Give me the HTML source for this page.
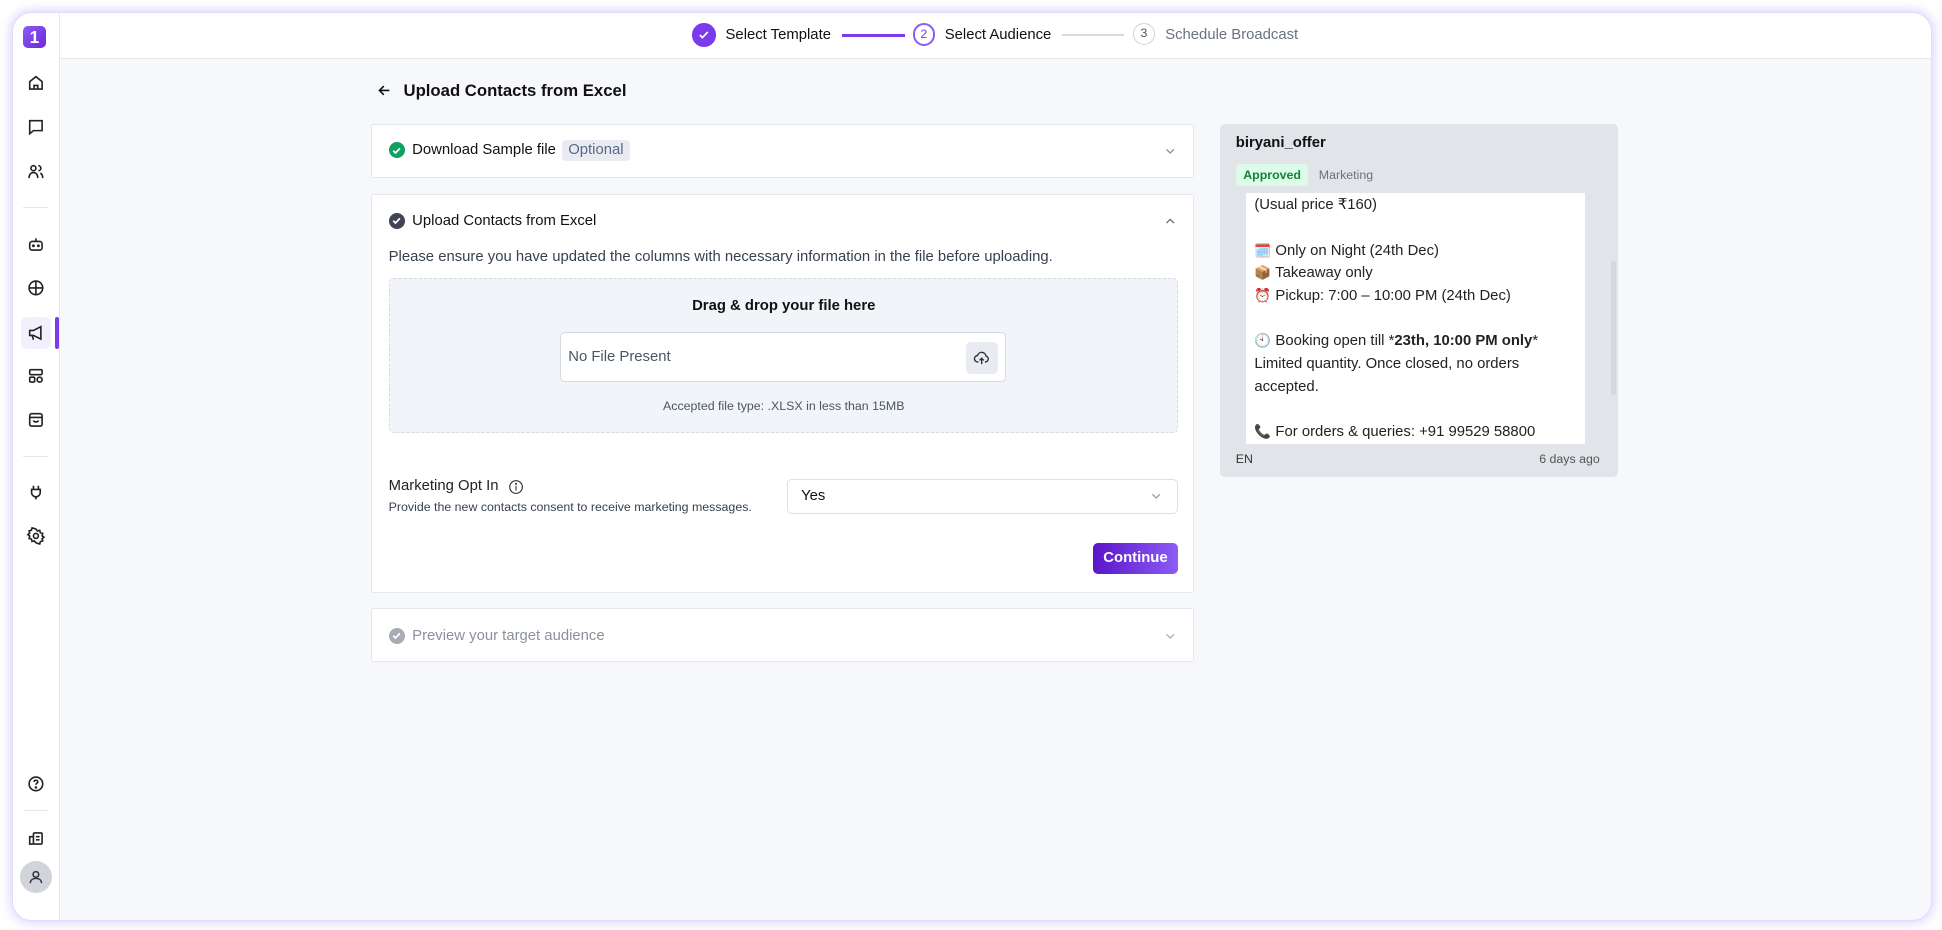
<!DOCTYPE html>
<html><head><meta charset="utf-8">
<style>
html,body{margin:0;padding:0;}
body{width:1942px;height:930px;overflow:hidden;background:#fff;font-family:"Liberation Sans",sans-serif;color:#111827;}
#s{width:1568px;height:751px;position:relative;zoom:1.23852;}
.a{position:absolute;}
.frame{left:10px;top:10px;width:1548px;height:732px;border-radius:16px;border:1px solid #e4dafc;box-shadow:0 0 8px 2px rgba(167,139,250,.35);background:#f6f8fb;overflow:hidden;}
.side{left:0;top:0;width:37px;height:732px;background:#fff;border-right:1px solid #e5e7eb;}
.top{left:38px;top:0;right:0;height:36px;background:#fff;border-bottom:1px solid #e5e7eb;}
.ic{position:absolute;left:10px;width:16px;height:16px;}
.div{position:absolute;left:8px;width:20px;height:1px;background:#e5e7eb;}
.card{background:#fff;border:1px solid #e5e7eb;border-radius:2px;}
.t{font-size:12px;white-space:nowrap;}
.chev{position:absolute;width:10px;height:10px;}
</style></head><body><div id="s">
<div class="a frame">
 <div class="a side">
  <div class="a" style="left:8px;top:10px;width:18px;height:18px;border-radius:4px;background:linear-gradient(135deg,#8b5cf6,#6d28d9);color:#fff;font-weight:bold;font-size:14px;text-align:center;line-height:18px;">1</div>
  <svg class="ic" style="top:48px" viewBox="0 0 16 16" fill="none" stroke="#222" stroke-width="1.3"><path d="M3 7l5-4 5 4v6H3z"/><path d="M6.5 13V10h3v3"/></svg>
  <svg class="ic" style="top:84px" viewBox="0 0 16 16" fill="none" stroke="#222" stroke-width="1.3"><path d="M3 3h10v8H6l-3 2.5z"/></svg>
  <svg class="ic" style="top:120px" viewBox="0 0 16 16" fill="none" stroke="#222" stroke-width="1.3"><circle cx="6" cy="5" r="2"/><path d="M2.5 13c0-3 1.5-4.5 3.5-4.5s3.5 1.5 3.5 4.5"/><path d="M10 3a2 2 0 010 4M11.5 9c1.2.5 2 2 2 4"/></svg>
  <div class="div" style="top:156px"></div>
  <svg class="ic" style="top:178px" viewBox="0 0 16 16" fill="none" stroke="#222" stroke-width="1.3"><rect x="3" y="6" width="10" height="7" rx="2"/><path d="M8 6V3.5"/><circle cx="6" cy="9.5" r=".5" fill="#222"/><circle cx="10" cy="9.5" r=".5" fill="#222"/></svg>
  <svg class="ic" style="top:214px" viewBox="0 0 16 16" fill="none" stroke="#222" stroke-width="1.3"><circle cx="8" cy="8" r="5.5"/><path d="M8 2.5v11M3 8h10"/></svg>
  <div class="a" style="left:6px;top:245px;width:24px;height:26px;border-radius:5px;background:#f3f0fd"></div>
  <div class="a" style="left:34px;top:245px;width:3px;height:26px;background:#7c3aed;border-radius:2px"></div>
  <svg class="ic" style="top:250px" viewBox="0 0 16 16" fill="none" stroke="#222" stroke-width="1.3"><path d="M3 6h3l6-3v10L6 10H3z"/><path d="M5 10l1 3.5"/></svg>
  <svg class="ic" style="top:285px" viewBox="0 0 16 16" fill="none" stroke="#222" stroke-width="1.3"><rect x="3" y="3" width="10" height="4" rx="1"/><rect x="3" y="9" width="4" height="4" rx="1"/><rect x="9" y="9" width="4" height="4" rx="2"/></svg>
  <svg class="ic" style="top:320px" viewBox="0 0 16 16" fill="none" stroke="#222" stroke-width="1.3"><rect x="3" y="3" width="10" height="10" rx="1.5"/><path d="M3 6h10M6 8.5c.5 1.5 3.5 1.5 4 0"/></svg>
  <div class="div" style="top:357px"></div>
  <svg class="ic" style="top:378px" viewBox="0 0 16 16" fill="none" stroke="#222" stroke-width="1.3"><path d="M6 3v3M10 3v3M4.5 6h7v2.5a3.5 3.5 0 01-7 0zM8 12v2"/></svg>
  <svg class="ic" style="top:414px" viewBox="0 0 16 16" fill="none" stroke="#222" stroke-width="1.3"><circle cx="8" cy="8" r="2"/><path d="M8 2.5l1.2 1.5 1.9-.5.5 1.9 1.9.6-.5 1.9 1.5 1.1-1.5 1.2.5 1.9-1.9.5-.5 1.9-1.9-.5L8 13.5 6.8 12l-1.9.5-.5-1.9-1.9-.5.5-1.9L1.5 7l1.5-1.2-.5-1.9 1.900-.5.5-1.9 1.9.5z"/></svg>
  <svg class="ic" style="top:614px" viewBox="0 0 16 16" fill="none" stroke="#222" stroke-width="1.3"><circle cx="8" cy="8" r="5.5"/><path d="M6.5 6.5a1.5 1.5 0 113 0c0 1-1.5 1.2-1.5 2.2"/><circle cx="8" cy="10.8" r=".4" fill="#222"/></svg>
  <div class="div" style="top:643px"></div>
  <svg class="ic" style="top:658px" viewBox="0 0 16 16" fill="none" stroke="#222" stroke-width="1.3"><rect x="6" y="4" width="7" height="9" rx="1"/><path d="M6 7H3v6h3M8 7h3M8 9.5h3"/></svg>
  <div class="a" style="left:5px;top:684px;width:26px;height:26px;border-radius:50%;background:#d1d5db"></div>
  <svg class="ic" style="top:689px;left:10px" viewBox="0 0 16 16" fill="none" stroke="#333" stroke-width="1.2"><circle cx="8" cy="6" r="2.3"/><path d="M3.5 13c0-2.5 2-3.8 4.5-3.8s4.5 1.3 4.5 3.8"/></svg>
 </div>
 <div class="a top">
  <div class="a" style="left:510px;top:8px;width:19px;height:19px;border-radius:50%;background:#7c3aed"></div>
  <svg class="a" style="left:514px;top:12px" width="11" height="11" viewBox="0 0 12 12" fill="none" stroke="#fff" stroke-width="1.5"><path d="M2.5 6.2l2.3 2.3 4.7-5"/></svg>
  <div class="a t" style="left:537px;top:11px;font-size:12px;color:#111">Select Template</div>
  <div class="a" style="left:631px;top:17px;width:51px;height:2px;background:#7c3aed"></div>
  <div class="a" style="left:688px;top:8px;width:15px;height:15px;border-radius:50%;border:2px solid #8b5cf6;color:#7c3aed;font-size:10px;text-align:center;line-height:15px">2</div>
  <div class="a t" style="left:714px;top:11px;font-size:12px;color:#111">Select Audience</div>
  <div class="a" style="left:809px;top:17px;width:50px;height:1px;background:#d7dae0"></div>
  <div class="a" style="left:866px;top:8px;width:16px;height:16px;border-radius:50%;border:1.5px solid #d1d5db;color:#555;font-size:10px;text-align:center;line-height:16px">3</div>
  <div class="a t" style="left:892px;top:11px;font-size:12px;color:#6b7280">Schedule Broadcast</div>
 </div>
 <svg class="a" style="left:294px;top:56px" width="12" height="12" viewBox="0 0 12 12" fill="none" stroke="#111" stroke-width="1.3"><path d="M10 6H2M5.5 2.5L2 6l3.5 3.5"/></svg>
 <div class="a" style="left:315px;top:55px;font-size:13.5px;font-weight:bold;color:#111">Upload Contacts from Excel</div>
 <div class="a card" style="left:289px;top:89px;width:663px;height:42px"></div>
 <div class="a" style="left:303px;top:104px;width:13px;height:13px;border-radius:50%;background:#10a060"></div>
 <svg class="a" style="left:305px;top:106px" width="9" height="9" viewBox="0 0 10 10" fill="none" stroke="#fff" stroke-width="1.6"><path d="M2 5.2l2 2 4-4.2"/></svg>
 <div class="a t" style="left:322px;top:104px;color:#111">Download Sample file</div>
 <div class="a t" style="left:443px;top:102px;background:#e8ecf2;color:#5a6a85;padding:2px 5px;border-radius:3px">Optional</div>
 <svg class="a chev" style="left:929px;top:106px" viewBox="0 0 10 10" fill="none" stroke="#888" stroke-width="1"><path d="M2 3.5l3 3 3-3"/></svg>
 <div class="a card" style="left:289px;top:146px;width:663px;height:320px"></div>
 <div class="a" style="left:303px;top:161px;width:13px;height:13px;border-radius:50%;background:#3f4556"></div>
 <svg class="a" style="left:305px;top:163px" width="9" height="9" viewBox="0 0 10 10" fill="none" stroke="#fff" stroke-width="1.6"><path d="M2 5.2l2 2 4-4.2"/></svg>
 <div class="a t" style="left:322px;top:161px;color:#111">Upload Contacts from Excel</div>
 <svg class="a chev" style="left:929px;top:163px" viewBox="0 0 10 10" fill="none" stroke="#666" stroke-width="1"><path d="M2 6.5l3-3 3 3"/></svg>
 <div class="a t" style="left:303px;top:190px;font-size:12px;color:#374151">Please ensure you have updated the columns with necessary information in the file before uploading.</div>
 <div class="a" style="left:303px;top:214px;width:636px;height:123px;background:#f1f4f8;border:1px dashed #d5dbe3;border-radius:4px"></div>
 <div class="a t" style="left:303px;top:230px;width:638px;text-align:center;font-size:12px;font-weight:bold;color:#111">Drag &amp; drop your file here</div>
 <div class="a" style="left:441px;top:257px;width:359px;height:39px;background:#fff;border:1px solid #d5d9e0;border-radius:4px"></div>
 <div class="a t" style="left:448px;top:271px;font-size:12px;color:#4b5563">No File Present</div>
 <div class="a" style="left:769px;top:265px;width:26px;height:26px;background:#e8ecf2;border-radius:4px"></div>
 <svg class="a" style="left:775px;top:271px" width="14" height="14" viewBox="0 0 16 16" fill="none" stroke="#333" stroke-width="1.3"><path d="M5 12H4.5a3 3 0 01-.3-6A4 4 0 0112 6.5a2.8 2.8 0 01-.5 5.5H11"/><path d="M8 14V8.5M6 10.5l2-2 2 2"/></svg>
 <div class="a t" style="left:303px;top:311px;width:638px;text-align:center;font-size:10px;color:#4b5563">Accepted file type: .XLSX in less than 15MB</div>
 <div class="a t" style="left:303px;top:375px;font-size:12px;color:#222">Marketing Opt In</div>
 <svg class="a" style="left:399px;top:376px" width="13" height="13" viewBox="0 0 14 14" fill="none" stroke="#333" stroke-width="1"><circle cx="7" cy="7" r="5.5"/><path d="M7 6v4"/><circle cx="7" cy="4.2" r=".4" fill="#333"/></svg>
 <div class="a t" style="left:303px;top:393px;font-size:10px;color:#374151">Provide the new contacts consent to receive marketing messages.</div>
 <div class="a" style="left:625px;top:376px;width:314px;height:27px;background:#fff;border:1px solid #dcdfe5;border-radius:4px"></div>
 <div class="a t" style="left:636px;top:383px;font-size:12px;color:#111">Yes</div>
 <svg class="a chev" style="left:918px;top:385px" viewBox="0 0 10 10" fill="none" stroke="#999" stroke-width="1"><path d="M2 3.5l3 3 3-3"/></svg>
 <div class="a" style="left:872px;top:428px;width:68px;height:25px;border-radius:4px;background:linear-gradient(90deg,#5b15c8,#8b5cf6);color:#fff;font-size:12px;font-weight:bold;text-align:center;line-height:25px">Continue</div>
 <div class="a card" style="left:289px;top:480px;width:663px;height:42px"></div>
 <div class="a" style="left:303px;top:496px;width:13px;height:13px;border-radius:50%;background:#a7acb5"></div>
 <svg class="a" style="left:305px;top:498px" width="9" height="9" viewBox="0 0 10 10" fill="none" stroke="#fff" stroke-width="1.6"><path d="M2 5.2l2 2 4-4.2"/></svg>
 <div class="a t" style="left:322px;top:496px;color:#8b919c">Preview your target audience</div>
 <svg class="a chev" style="left:929px;top:498px" viewBox="0 0 10 10" fill="none" stroke="#aaa" stroke-width="1"><path d="M2 3.5l3 3 3-3"/></svg>
 <div class="a" style="left:974px;top:89px;width:322px;height:285px;background:#e1e4e9;border-radius:4px"></div>
 <div class="a t" style="left:987px;top:98px;font-size:12px;font-weight:bold;color:#111">biryani_offer</div>
 <div class="a t" style="left:987px;top:122px;background:#dcfce7;color:#15803d;font-size:10px;font-weight:bold;padding:3px 6px;border-radius:3px">Approved</div>
 <div class="a t" style="left:1054px;top:125px;font-size:10px;color:#6b7280">Marketing</div>
 <div class="a" style="left:995px;top:145px;width:274px;height:203px;background:#fff;font-size:12px;line-height:18.3px;color:#222;overflow:hidden">
  <div style="padding:2px 0 0 7px;margin-top:-1px">(Usual price ₹160)<br><br>
  <span style="font-size:11px">🗓️</span> Only on Night (24th Dec)<br>
  <span style="font-size:11px">📦</span> Takeaway only<br>
  <span style="font-size:11px">⏰</span> Pickup: 7:00 – 10:00 PM (24th Dec)<br><br>
  <span style="font-size:11px">🕙</span> Booking open till *<b>23th, 10:00 PM only</b>*<br>
  Limited quantity. Once closed, no orders accepted.<br><br>
  <span style="font-size:11px;color:#e11d48">📞</span> For orders &amp; queries: +91 99529 58800</div>
 </div>
 <div class="a" style="left:1290px;top:200px;width:4px;height:108px;background:#d4d7dc;border-radius:2px"></div>
 <div class="a t" style="left:987px;top:354px;font-size:10px;color:#333">EN</div>
 <div class="a t" style="left:1232px;top:354px;font-size:10px;color:#555">6 days ago</div>
</div>
</div></body></html>
